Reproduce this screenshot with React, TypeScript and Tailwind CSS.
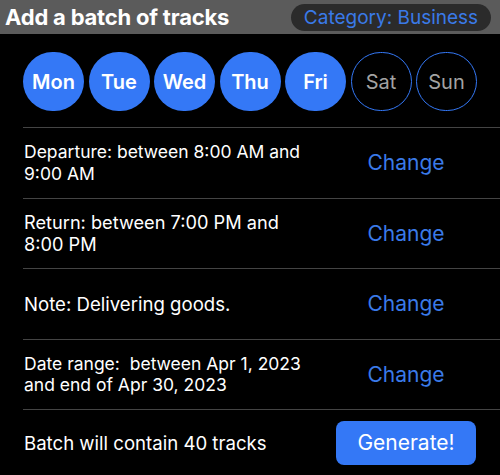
import React from "react";

const days = [
  { label: "Mon", on: true },
  { label: "Tue", on: true },
  { label: "Wed", on: true },
  { label: "Thu", on: true },
  { label: "Fri", on: true },
  { label: "Sat", on: false },
  { label: "Sun", on: false },
];

const rows = [
  { lines: ["Departure: between 8:00 AM and", "9:00 AM"], cls: "text-[17.5px] leading-[22px]" },
  { lines: ["Return: between 7:00 PM and", "8:00 PM"], cls: "text-[18.2px] leading-[22px]" },
  { lines: ["Note: Delivering goods."], cls: "text-[18.6px] leading-[22px]" },
  { lines: ["Date range:  between Apr 1, 2023", "and end of Apr 30, 2023"], cls: "text-[17.5px] leading-[21px]" },
];

export default function App() {
  return (
    <div
      className="w-[500px] h-[475px] bg-black overflow-hidden text-white"
      style={{ fontFamily: "Inter, 'Liberation Sans', sans-serif" }}
    >
      <div className="h-[34px] bg-[#5b5b5b] flex items-center justify-between pl-[5px] pr-[9px]">
        <div className="text-[22px] font-bold leading-none tracking-[-0.2px]">Add a batch of tracks</div>
        <div className="h-[27px] w-[200px] rounded-full bg-[#2b2b2b] flex items-center justify-center text-[19px] text-[#3a7ae8] leading-none">
          Category: Business
        </div>
      </div>

      <div className="flex gap-[4.5px] pl-[23px] pt-[18px] pb-[16px]">
        {days.map((d) =>
          d.on ? (
            <div
              key={d.label}
              className="w-[61px] h-[59px] rounded-full bg-[#3478f6] flex items-center justify-center text-[20px] font-semibold text-white"
            >
              {d.label}
            </div>
          ) : (
            <div
              key={d.label}
              className="w-[61px] h-[59px] rounded-full border-[1.5px] border-[#3478f6] flex items-center justify-center text-[20px] text-[#a3a3a3]"
            >
              {d.label}
            </div>
          )
        )}
      </div>

      <div className="ml-[23px]">
        {rows.map((r) => (
          <div key={r.lines[0]} className="border-t-[1.5px] border-[#444444] h-[70.5px] flex items-center">
            <div className={`w-[313px] pl-[1px] pr-[6px] whitespace-pre ${r.cls}`}>
              {r.lines.map((l, i) => (
                <div key={i}>{l}</div>
              ))}
            </div>
            <div className="w-[140px] flex justify-center text-[21px] text-[#3a7ae8]">Change</div>
          </div>
        ))}
        <div className="border-t-[1.5px] border-[#444444] h-[66px] flex items-center">
          <div className="w-[313px] pl-[1px] text-[18.6px] leading-[22px]">Batch will contain 40 tracks</div>
          <button className="w-[140px] h-[44px] rounded-[8px] bg-[#3478f6] text-white text-[21px] flex items-center justify-center">
            Generate!
          </button>
        </div>
      </div>
    </div>
  );
}
